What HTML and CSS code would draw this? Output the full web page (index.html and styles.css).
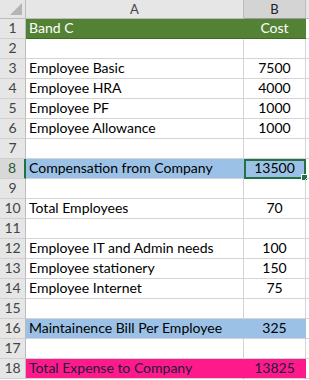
FILE: index.html
```html
<!DOCTYPE html>
<html>
<head>
<meta charset="utf-8">
<link rel="stylesheet" href="styles.css">
</head>
<body>
<div class="sheet">
  <div class="hd corner"><span class="tri"></span></div>
  <div class="hd colhd">A</div>
  <div class="hd colhd sel-col">B</div>
  <div class="hd colhd rest"></div>

  <div class="rh">1</div><div class="c green">Band C</div><div class="c green num">Cost</div><div class="c rest"></div>
  <div class="rh">2</div><div class="c"></div><div class="c num"></div><div class="c rest"></div>
  <div class="rh">3</div><div class="c">Employee Basic</div><div class="c num">7500</div><div class="c rest"></div>
  <div class="rh">4</div><div class="c">Employee HRA</div><div class="c num">4000</div><div class="c rest"></div>
  <div class="rh">5</div><div class="c">Employee PF</div><div class="c num">1000</div><div class="c rest"></div>
  <div class="rh">6</div><div class="c">Employee Allowance</div><div class="c num">1000</div><div class="c rest"></div>
  <div class="rh">7</div><div class="c"></div><div class="c num"></div><div class="c rest"></div>
  <div class="rh sel-row">8</div><div class="c blue">Compensation from Company</div><div class="c blue num active">13500<span class="handle"></span></div><div class="c rest"></div>
  <div class="rh">9</div><div class="c"></div><div class="c num"></div><div class="c rest"></div>
  <div class="rh">10</div><div class="c">Total Employees</div><div class="c num">70</div><div class="c rest"></div>
  <div class="rh">11</div><div class="c"></div><div class="c num"></div><div class="c rest"></div>
  <div class="rh">12</div><div class="c">Employee IT and Admin needs</div><div class="c num">100</div><div class="c rest"></div>
  <div class="rh">13</div><div class="c">Employee stationery</div><div class="c num">150</div><div class="c rest"></div>
  <div class="rh">14</div><div class="c">Employee Internet</div><div class="c num">75</div><div class="c rest"></div>
  <div class="rh">15</div><div class="c"></div><div class="c num"></div><div class="c rest"></div>
  <div class="rh">16</div><div class="c blue">Maintainence Bill Per Employee</div><div class="c blue num">325</div><div class="c rest"></div>
  <div class="rh">17</div><div class="c"></div><div class="c num"></div><div class="c rest"></div>
  <div class="rh">18</div><div class="c pink">Total Expense to Company</div><div class="c pink num">13825</div><div class="c rest"></div>
</div>
</body>
</html>
```
FILE: styles.css
```css
html, body {
  margin: 0;
  padding: 0;
  background: #ffffff;
  overflow: hidden;
}
.sheet {
  display: grid;
  grid-template-columns: 26px 218px 62px 1fr;
  grid-template-rows: 19px repeat(18, 20px);
  width: 309px;
  font-family: Lato, "Liberation Sans", sans-serif;
  font-size: 14px;
  color: #000;
}
.hd {
  background: #e6e6e6;
  border-right: 1px solid #bcbcbc;
  border-bottom: 1px solid #bcbcbc;
  color: #444;
  font-size: 13px;
  display: flex;
  align-items: center;
  justify-content: center;
  box-sizing: border-box;
  position: relative;
}
.colhd.sel-col {
  background: #d4d4d4;
  color: #222;
  border-bottom: 1px solid #9a9a9a;
}
.colhd.rest { border-right: none; }
.corner .tri {
  position: absolute;
  right: 3px;
  bottom: 3px;
  width: 0;
  height: 0;
  border-left: 12px solid transparent;
  border-bottom: 12px solid #b5b5b5;
}
.rh {
  background: #e6e6e6;
  border-right: 1px solid #bcbcbc;
  border-bottom: 1px solid #d0d0d0;
  color: #444;
  font-size: 14px;
  display: flex;
  align-items: flex-end;
  justify-content: center;
  padding-bottom: 2px;
  box-sizing: border-box;
}
.rh.sel-row {
  background: #d8d8d8;
  color: #2a5a3a;
  border-right: 2px solid #217346;
}
.c {
  border-right: 1px solid #d4d4d4;
  border-bottom: 1px solid #d4d4d4;
  box-sizing: border-box;
  display: flex;
  align-items: flex-end;
  padding: 0 3px 2px 3px;
  white-space: nowrap;
  position: relative;
}
.c.num { justify-content: center; }
.c.rest { border-right: none; }
.green {
  background: #548235;
  color: #ffffff;
  border-right-color: #548235;
  border-bottom-color: #3f6a26;
}
.blue {
  background: #9bc2e6;
  border-right-color: #9bc2e6;
}
.pink {
  background: #ff1a8c;
  color: #1a1a3a;
  border-right-color: #ff1a8c;
}
.active {
  outline: 2px solid #217346;
  outline-offset: -2px;
  border-right-color: #217346;
}
.handle {
  position: absolute;
  right: -3px;
  bottom: -3px;
  width: 5px;
  height: 5px;
  background: #217346;
  border: 1px solid #fff;
}
```
